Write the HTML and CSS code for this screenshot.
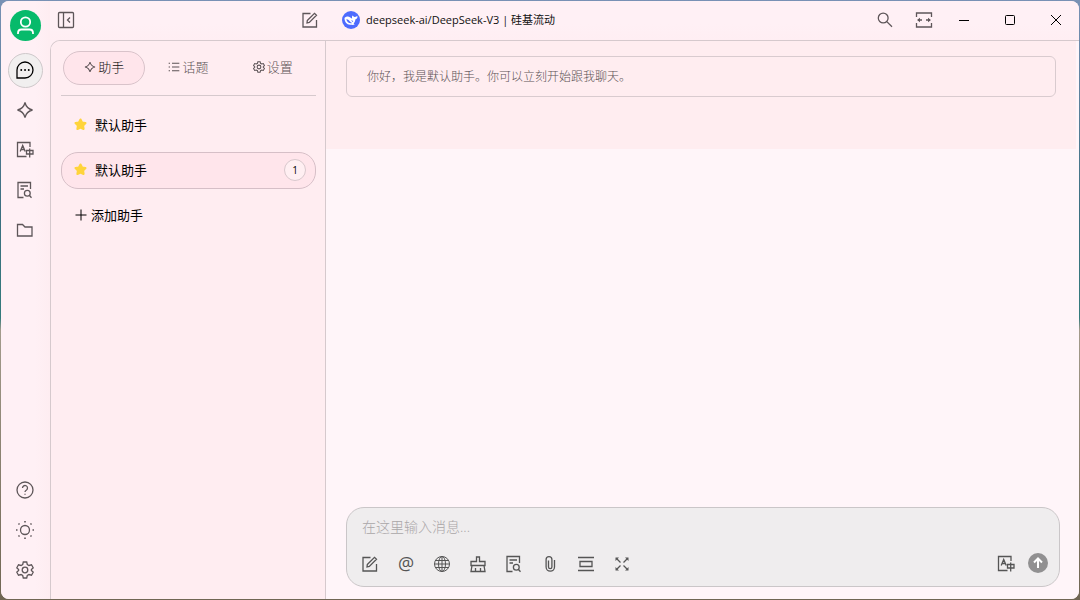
FILE: index.html
```html
<!DOCTYPE html>
<html lang="zh-CN">
<head>
<meta charset="utf-8">
<title>默认助手</title>
<link rel="stylesheet" href="styles.css">
</head>
<body>
<svg class="sprite" aria-hidden="true">
  <symbol id="sparkle" viewBox="0 0 18 18"><path d="M9 1.500C9.800 5 13 8.200 16.500 9C13 9.800 9.800 13 9 16.500C8.200 13 5 9.800 1.500 9C5 8.200 8.200 5 9 1.500Z"/></symbol>
  <symbol id="translate" viewBox="0 0 18 18"><path d="M14 6V1.500H1.500V15.500H10.500M4.200 10.500L6.700 4.500L9.200 10.500M5.200 8.500H8.200M10.500 9.500H17V13H10.500ZM13.700 7.500V16.500"/></symbol>
  <symbol id="docsearch" viewBox="0 0 18 18"><path d="M7.500 16.500H2V1.500H14.500V8M4.500 5H12M4.500 8H8M13.500 14.500L15.500 16.800"/><circle cx="11.300" cy="12.200" r="2.900"/></symbol>
  <symbol id="edit" viewBox="0 0 18 18"><path d="M9.500 2.500H2V16H15.500V9M6.300 9.500L13.500 2.300L15.500 4.300L8.300 11.500L6 12Z"/></symbol>
  <symbol id="gear" viewBox="0 0 18 18"><path d="M7.300 1H10.700L11.300 3.500L13 4.500L15.500 3.800L17.200 6.800L15.400 8.500V9.500L17.200 11.200L15.500 14.200L13 13.500L11.300 14.500L10.700 17H7.300L6.700 14.500L5 13.500L2.500 14.200L.8 11.200L2.600 9.500V8.500L.8 6.800L2.500 3.800L5 4.500L6.700 3.500Z"/><circle cx="9" cy="9" r="2.800"/></symbol>
  <symbol id="star" viewBox="0 0 18 18"><path d="M9 3L10.900 6.600L15 7.300L12.100 10.300L12.700 14.400L9 12.600L5.300 14.400L5.900 10.300L3 7.300L7.100 6.600Z" fill="#ffd43b" stroke="#ffd43b" stroke-width="2.500" stroke-linejoin="round"/></symbol>
</svg>

<div class="window">
  <nav class="rail" aria-label="主导航">
    <button class="avatar" aria-label="用户"><svg viewBox="0 0 31 31"><circle cx="15.500" cy="12" r="4.700"/><path d="M8 24V23Q8 19.500 11.500 19.500H19.500Q23 19.500 23 23V24"/></svg></button>
    <button class="rail-btn active" aria-label="聊天"><svg class="icon large" viewBox="0 0 20 20"><path d="M2 18V10A8 8 0 1 1 10 18Z"/><path class="dots" d="M6.200 10H6.300M10 10H10.100M13.700 10H13.800"/></svg></button>
    <button class="rail-btn" aria-label="助手"><svg class="icon"><use href="#sparkle"/></svg></button>
    <button class="rail-btn" aria-label="翻译"><svg class="icon"><use href="#translate"/></svg></button>
    <button class="rail-btn" aria-label="知识库"><svg class="icon"><use href="#docsearch"/></svg></button>
    <button class="rail-btn" aria-label="文件"><svg class="icon" viewBox="0 0 18 18"><path d="M1.500 3.500H6.500L9 6H16V15H1.500Z"/></svg></button>
    <span class="spacer"></span>
    <button class="rail-btn" aria-label="帮助"><svg class="icon" viewBox="0 0 18 18"><circle cx="9" cy="9" r="8"/><path d="M6.500 7A2.500 2.500 0 1 1 10.500 9Q9 9.800 9 11M9 12.700V13.700"/></svg></button>
    <button class="rail-btn" aria-label="主题"><svg class="icon" viewBox="0 0 18 18"><circle cx="9" cy="9" r="4.500"/><path class="rays" d="M9 0V1.500M9 16.500V18M0 9H1.500M16.500 9H18M2.500 2.500L3.500 3.500M14.500 14.500L15.500 15.500M2.500 15.500L3.500 14.500M14.500 3.500L15.500 2.500"/></svg></button>
    <button class="rail-btn" aria-label="设置"><svg class="icon"><use href="#gear"/></svg></button>
  </nav>

  <header class="titlebar">
    <div class="side-tools">
      <button class="tool" aria-label="收起侧栏"><svg class="icon" viewBox="0 0 18 18"><rect x="1.500" y="1.500" width="15" height="15" rx="1"/><path d="M6.500 1.500V16.500M13 6.500L10.500 9L13 11.500"/></svg></button>
      <button class="tool" aria-label="新建话题"><svg class="icon"><use href="#edit"/></svg></button>
    </div>
    <button class="model">
      <svg class="logo" viewBox="0 0 18 18"><circle cx="9" cy="9" r="9" fill="#4d6bfe"/><path d="M2.500 7C4 5.200 6.500 5 8.300 6.400L10.200 7.800C9.700 6.500 10 5.200 10.800 4.600C11.200 5.700 12 6 13 5.900C14.200 5.800 14.700 5.200 15.600 5.400C15.300 7.200 14.700 8 13.300 8.400C13.300 10.200 12.500 11.500 11.600 12.400L12.700 13.500C10.800 14.300 9.500 13.600 8.500 13.700C5 14 2.400 10.800 2.500 7Z" fill="#fff"/><path d="M4.300 8.200C6.200 8 7 9.400 8 10.500C8.600 11.200 9.400 11.900 10.200 12.100C7.500 13 4.700 10.800 4.300 8.200ZM9.200 8.800L11.300 10.200L10.300 10.900Z" fill="#4d6bfe"/></svg>
      <span>deepseek-ai/DeepSeek-V3 | 硅基流动</span>
    </button>
    <div class="actions">
      <button class="tool" aria-label="搜索"><svg class="icon" viewBox="0 0 18 18"><circle cx="7.200" cy="7" r="4.900"/><path d="M10.800 10.600L16 15.800"/></svg></button>
      <button class="tool" aria-label="加宽"><svg class="icon" viewBox="0 0 18 18"><path d="M1.500 6V2H16.500V6M1.500 12V16H16.500V12M3 9H7M11 9H15"/><path class="solid" d="M2 9L5 6.800V11.200ZM16 9L13 6.800V11.200Z"/></svg></button>
    </div>
    <div class="controls">
      <button aria-label="最小化"><svg viewBox="0 0 12 12"><path d="M1 6.500H11"/></svg></button>
      <button aria-label="最大化"><svg viewBox="0 0 12 12"><rect x="1.500" y="1.500" width="9" height="9" rx="1"/></svg></button>
      <button aria-label="关闭"><svg viewBox="0 0 12 12"><path d="M1 1L11 11M11 1L1 11"/></svg></button>
    </div>
  </header>

  <div class="content">
    <aside class="sidebar">
      <div class="tabs" role="tablist">
        <button class="tab selected" role="tab" aria-selected="true"><svg class="mini"><use href="#sparkle"/></svg>助手</button>
        <button class="tab" role="tab" aria-selected="false"><svg class="mini" viewBox="0 0 18 18"><path d="M1 3.500H3M1 9H3M1 14.500H3M6 3.500H17M6 9H17M6 14.500H17"/></svg>话题</button>
        <button class="tab" role="tab" aria-selected="false"><svg class="mini"><use href="#gear"/></svg>设置</button>
      </div>
      <div class="assistants">
        <button class="assistant"><svg class="star"><use href="#star"/></svg><span>默认助手</span></button>
        <button class="assistant current"><svg class="star"><use href="#star"/></svg><span>默认助手</span><span class="count">1</span></button>
        <button class="assistant add"><svg class="plus" viewBox="0 0 12 12"><path d="M6 .5V11.500M.5 6H11.500"/></svg><span>添加助手</span></button>
      </div>
    </aside>

    <main class="chat">
      <section class="messages"><p class="greeting">你好，我是默认助手。你可以立刻开始跟我聊天。</p></section>
      <form class="composer">
        <textarea rows="1" aria-label="消息" placeholder="在这里输入消息..."></textarea>
        <div class="toolbar">
          <button type="button" aria-label="新话题"><svg class="icon"><use href="#edit"/></svg></button>
          <button type="button" class="at" aria-label="提及模型">@</button>
          <button type="button" aria-label="联网"><svg class="icon thin" viewBox="0 0 18 18"><circle cx="9" cy="9" r="7.500"/><ellipse cx="9" cy="9" rx="3.500" ry="7.500"/><path d="M9 1.500V16.500M1.500 9H16.500M2.500 5.500H15.500M2.500 12.500H15.500"/></svg></button>
          <button type="button" aria-label="清空"><svg class="icon" viewBox="0 0 18 18"><path d="M7.500 6.500V2H10.500V6.500H16V10.500H2V6.500ZM3 10.500L2 16.500H16L15 10.500M6.500 13V16.500M11.500 13V16.500"/></svg></button>
          <button type="button" aria-label="知识库"><svg class="icon"><use href="#docsearch"/></svg></button>
          <button type="button" aria-label="附件"><svg class="icon" viewBox="0 0 18 18"><path d="M7.500 5.500V12A1.700 1.700 0 0 0 10.900 12V4.500A2.900 2.900 0 0 0 5.100 4.500V12A4.200 4.200 0 0 0 13.500 12V5"/></svg></button>
          <button type="button" aria-label="清除上下文"><svg class="icon" viewBox="0 0 18 18"><path d="M1 2.500H17M1 15.500H17M3 6.500H15V11.500H3Z"/></svg></button>
          <button type="button" aria-label="展开"><svg class="icon" viewBox="0 0 18 18"><path d="M4 4L7.500 7.500M14 4L10.500 7.500M4 14L7.500 10.500M14 14L10.500 10.500"/><path class="solid" d="M2.500 2.500H6L2.500 6ZM15.500 2.500V6L12 2.500ZM2.500 15.500V12L6 15.500ZM15.500 15.500H12L15.500 12Z"/></svg></button>
          <span class="spacer"></span>
          <button type="button" aria-label="翻译"><svg class="icon"><use href="#translate"/></svg></button>
          <button type="submit" class="send" aria-label="发送"><svg viewBox="0 0 20 20"><circle cx="10" cy="10" r="10"/><path d="M10 15V5.500M6 9.500L10 5.500L14 9.500"/></svg></button>
        </div>
      </form>
    </main>
  </div>
</div>
</body>
</html>
```
FILE: styles.css
```css
* { box-sizing: border-box; }
body {
  margin: 0;
  height: 100vh;
  padding: 1px;
  background: linear-gradient(#7991b5, #3b6f80 35%, #347b7c 53%, #a39b8c 55%, #706653);
  font-family: "Open Sans", "Noto Sans CJK SC", sans-serif;
  font-size: 13px;
  line-height: 18px;
  color: #000;
}
button {
  display: flex;
  align-items: center;
  justify-content: center;
  padding: 0;
  border: 0;
  background: none;
  color: inherit;
  font: inherit;
}
svg { flex: none; fill: none; stroke: currentColor; }
.sprite { display: none; }
.icon { width: 18px; height: 18px; stroke-width: 1.3; }
.icon.large { width: 20px; height: 20px; }
.icon.thin { stroke-width: 1; }
.solid { fill: currentColor; stroke: none; }
.spacer { flex: 1; }

.window {
  display: grid;
  grid-template: 39px 1fr / 49px 1fr;
  height: 100%;
  overflow: hidden;
  border-radius: 8px;
  background: #ffeff4;
}
.rail {
  grid-row: 1 / 3;
  display: flex;
  flex-direction: column;
  align-items: center;
  gap: 5px;
  padding: 9px 0 11px;
  color: #5e5659;
  background: linear-gradient(to right, #fff0f5 70%, #feedf1);
}
.avatar { width: 31px; height: 31px; margin-bottom: 7px; border-radius: 50%; background: #07ba6b; color: #fff; }
.avatar svg { width: 31px; height: 31px; stroke-width: 1.8; }
.rail-btn { width: 35px; height: 35px; padding: 0 1px 1px 0; border: 1px solid transparent; border-radius: 50%; }
.rail-btn.active { border-color: #cec8ca; background: #f1efef; color: #000; }
.dots { stroke-width: 1.8; stroke-linecap: round; }
.rays { stroke-width: 1.6; }

.titlebar { display: flex; align-items: center; padding-bottom: 1px; color: #5e5659; background: linear-gradient(#fff0f5 60%, #ffeef3); }
.side-tools { display: flex; justify-content: space-between; width: 276px; padding: 0 7px; }
.tool { width: 18px; height: 30px; }
.model { gap: 6px; margin-left: 16px; color: #111; font-size: 11px; }
.logo { width: 18px; height: 18px; stroke: none; }
.actions { display: flex; gap: 21px; margin-left: auto; margin-right: 8px; }
.controls { display: flex; color: #000; }
.controls button { width: 46px; height: 38px; }
.controls svg { width: 12px; height: 12px; }

.content {
  display: flex;
  min-height: 0;
  overflow: hidden;
  border: solid #d6c9cd;
  border-width: 1px 0 0 1px;
  border-top-left-radius: 10px;
}
.sidebar { flex: none; width: 275px; padding: 10px 9px 0 10px; border-right: 1px solid #d6c9cd; background: #ffedf1; }
.tabs {
  display: grid;
  grid-template-columns: repeat(3, 1fr);
  gap: 2px;
  padding: 0 2px 10px;
  border-bottom: 1px solid #d6c9cd;
}
.tab { gap: 2px; height: 34px; padding-bottom: 2px; border: 1px solid transparent; border-radius: 17px; color: #5c5356; font-weight: 300; }
.tab.selected { border-color: #d9c3ca; background: #ffe5eb; color: #111; }
.mini { width: 12px; height: 12px; color: #5c5356; stroke-width: 1.6; }
.assistants { display: flex; flex-direction: column; gap: 8px; padding-top: 11px; }
.assistant { justify-content: flex-start; gap: 7px; height: 37px; padding: 0 9px 2px 11px; border: 1px solid transparent; border-radius: 17px; }
.assistant.current { border-color: #d6bfc7; background: #ffe5eb; }
.assistant.add { gap: 4px; padding-left: 13px; }
.star { width: 15px; height: 15px; }
.plus { width: 12px; height: 12px; }
.count {
  display: flex;
  align-items: center;
  justify-content: center;
  width: 22px;
  height: 22px;
  margin-left: auto;
  border: 1px solid #d9c8cd;
  border-radius: 50%;
  background: #ffeff2;
  font-size: 10px;
}

.chat { display: flex; flex: 1; flex-direction: column; min-width: 0; background: #fff5f9; }
.messages { margin-right: 3px; padding: 15px 20px 52px; background: #ffedf0; }
.greeting { margin: 0; padding: 10px 20px; border: 1px solid #d9cbcf; border-radius: 6px; color: #5c5356; font-size: 12px; font-weight: 300; line-height: 19px; }
.composer { margin: auto 19px 12px 20px; padding: 9px 11px 7px 14px; border: 1px solid #cac6c8; border-radius: 18px; background: #efedee; }
textarea {
  display: block;
  width: 100%;
  height: 22px;
  padding: 0 1px;
  border: 0;
  outline: 0;
  resize: none;
  overflow: hidden;
  background: none;
  font: inherit;
  font-size: 14px;
  font-weight: 300;
  line-height: 20px;
}
textarea::placeholder { color: #aaa6a8; }
.toolbar { display: flex; align-items: center; gap: 18px; margin-top: 10px; color: #555; }
.toolbar button { width: 18px; height: 30px; }
.toolbar .at { padding-bottom: 2px; font-size: 18px; }
.toolbar .send { width: 20px; margin-left: -5px; padding-bottom: 2px; }
.send svg { width: 20px; height: 20px; stroke: none; }
.send circle { fill: #919091; }
.send path { stroke: #fff; stroke-width: 2; }
```
